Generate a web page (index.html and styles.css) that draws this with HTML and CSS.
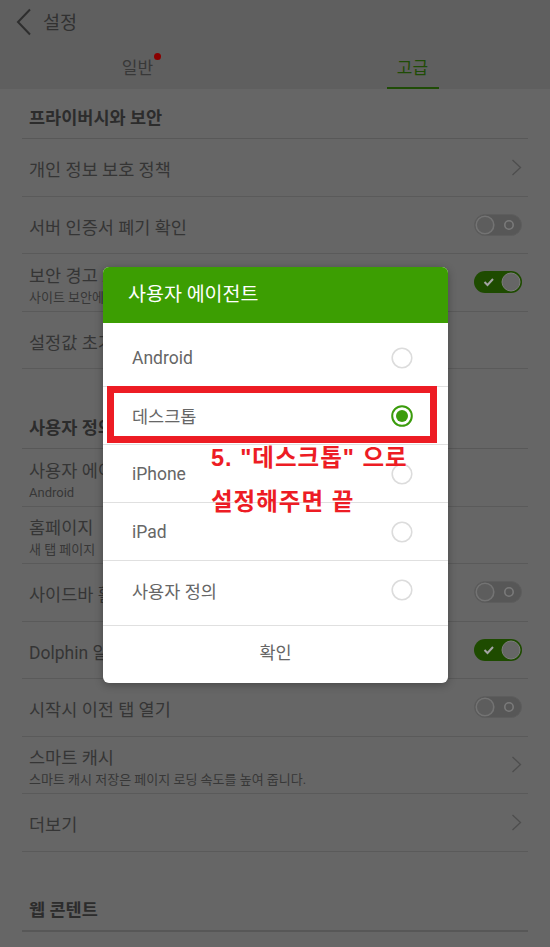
FILE: index.html
```html
<!DOCTYPE html>
<html lang="ko">
<head>
<meta charset="utf-8">
<title>설정</title>
<link rel="stylesheet" href="styles.css">
</head>
<body>
<div class="screen">
  <header class="topbar">
    <svg class="back" width="16" height="28" viewBox="0 0 16 28"><polyline points="14,1.5 2,14 14,26.5" fill="none" stroke="#2e2e2e" stroke-width="2"/></svg>
    <span class="title">설정</span>
  </header>
  <nav class="tabs">
    <div class="tab"><span class="tab-label">일반<span class="dot"></span></span></div>
    <div class="tab active"><span class="tab-label">고급</span></div>
  </nav>

  <main class="list">
    <div class="section first"><span>프라이버시와 보안</span></div>
    <div class="row"><div class="text"><div class="t">개인 정보 보호 정책</div></div><svg class="chev" width="11" height="17" viewBox="0 0 11 17"><polyline points="1.5,1 9.5,8.5 1.5,16" fill="none" stroke="#4e4e4e" stroke-width="1.3"/></svg></div>
    <div class="row"><div class="text"><div class="t">서버 인증서 폐기 확인</div></div><svg class="tog" width="48" height="22" viewBox="0 0 48 22"><rect x="0.5" y="0.5" width="47" height="21" rx="10.5" fill="#575757" stroke="#5d5d5d"/><circle cx="11" cy="11" r="8.8" fill="#5d5d5d" stroke="#737373" stroke-width="1.6"/><circle cx="35" cy="11" r="4.2" fill="none" stroke="#7a7a7a" stroke-width="1.6"/></svg></div>
    <div class="row two"><div class="text"><div class="t">보안 경고 표시</div><div class="s">사이트 보안에 문제가 있을 경우 경고합니다</div></div><svg class="tog" width="48" height="22" viewBox="0 0 48 22"><rect x="0" y="0" width="48" height="22" rx="11" fill="#1e4b00"/><circle cx="37" cy="11" r="9" fill="#666" stroke="#7c7c7c" stroke-width="1"/><polyline points="10.5,11 13.5,14 19,8" fill="none" stroke="#a4a4a4" stroke-width="2"/></svg></div>
    <div class="row"><div class="text"><div class="t">설정값 초기화</div></div></div>

    <div class="section"><span>사용자 정의</span></div>
    <div class="row two"><div class="text"><div class="t">사용자 에이전트</div><div class="s">Android</div></div></div>
    <div class="row two"><div class="text"><div class="t">홈페이지</div><div class="s">새 탭 페이지</div></div></div>
    <div class="row"><div class="text"><div class="t">사이드바 활성화</div></div><svg class="tog" width="48" height="22" viewBox="0 0 48 22"><rect x="0.5" y="0.5" width="47" height="21" rx="10.5" fill="#575757" stroke="#5d5d5d"/><circle cx="11" cy="11" r="8.8" fill="#5d5d5d" stroke="#737373" stroke-width="1.6"/><circle cx="35" cy="11" r="4.2" fill="none" stroke="#7a7a7a" stroke-width="1.6"/></svg></div>
    <div class="row"><div class="text"><div class="t">Dolphin 알림</div></div><svg class="tog" width="48" height="22" viewBox="0 0 48 22"><rect x="0" y="0" width="48" height="22" rx="11" fill="#1e4b00"/><circle cx="37" cy="11" r="9" fill="#666" stroke="#7c7c7c" stroke-width="1"/><polyline points="10.5,11 13.5,14 19,8" fill="none" stroke="#a4a4a4" stroke-width="2"/></svg></div>
    <div class="row"><div class="text"><div class="t">시작시 이전 탭 열기</div></div><svg class="tog" width="48" height="22" viewBox="0 0 48 22"><rect x="0.5" y="0.5" width="47" height="21" rx="10.5" fill="#575757" stroke="#5d5d5d"/><circle cx="11" cy="11" r="8.8" fill="#5d5d5d" stroke="#737373" stroke-width="1.6"/><circle cx="35" cy="11" r="4.2" fill="none" stroke="#7a7a7a" stroke-width="1.6"/></svg></div>
    <div class="row two"><div class="text"><div class="t">스마트 캐시</div><div class="s">스마트 캐시 저장은 페이지 로딩 속도를 높여 줍니다.</div></div><svg class="chev" width="11" height="17" viewBox="0 0 11 17"><polyline points="1.5,1 9.5,8.5 1.5,16" fill="none" stroke="#4e4e4e" stroke-width="1.3"/></svg></div>
    <div class="row"><div class="text"><div class="t">더보기</div></div><svg class="chev" width="11" height="17" viewBox="0 0 11 17"><polyline points="1.5,1 9.5,8.5 1.5,16" fill="none" stroke="#4e4e4e" stroke-width="1.3"/></svg></div>

    <div class="section web"><span>웹 콘텐트</span></div>
    <div class="row"><div class="text"><div class="t">페이지 스크롤 속도</div></div></div>
  </main>

  <div class="dialog">
    <div class="dlg-head">사용자 에이전트</div>
    <div class="dlg-list">
      <div class="opt"><span>Android</span><svg width="22" height="22" viewBox="0 0 22 22"><circle cx="11" cy="11" r="9.8" fill="none" stroke="#dcdcdc" stroke-width="1.6"/></svg></div>
      <div class="opt"><span>데스크톱</span><svg width="22" height="22" viewBox="0 0 22 22"><circle cx="11" cy="11" r="9.8" fill="none" stroke="#3b9c0c" stroke-width="2"/><circle cx="11" cy="11" r="6" fill="#3b9c0c"/></svg></div>
      <div class="opt"><span>iPhone</span><svg width="22" height="22" viewBox="0 0 22 22"><circle cx="11" cy="11" r="9.8" fill="none" stroke="#dcdcdc" stroke-width="1.6"/></svg></div>
      <div class="opt"><span>iPad</span><svg width="22" height="22" viewBox="0 0 22 22"><circle cx="11" cy="11" r="9.8" fill="none" stroke="#dcdcdc" stroke-width="1.6"/></svg></div>
      <div class="opt"><span>사용자 정의</span><svg width="22" height="22" viewBox="0 0 22 22"><circle cx="11" cy="11" r="9.8" fill="none" stroke="#dcdcdc" stroke-width="1.6"/></svg></div>
    </div>
    <div class="dlg-btn">확인</div>
  </div>

  <div class="mark-box"></div>
  <div class="mark-text">5. "데스크톱" 으로<br>설정해주면 끝</div>
</div>
</body>
</html>
```

FILE: styles.css
```css
* { box-sizing: border-box; }
html, body { margin: 0; padding: 0; }
body {
  width: 550px;
  height: 947px;
  overflow: hidden;
  font-family: Roboto, "Noto Sans CJK KR", sans-serif;
  background: #666666;
}
.screen {
  position: relative;
  width: 550px;
  height: 947px;
  overflow: hidden;
  background: #666666;
}
.topbar {
  height: 44px;
  background: #5f5f5f;
  display: flex;
  align-items: center;
  padding-left: 16px;
  gap: 11px;
}
.topbar .back { display: block; }
.topbar .title {
  font-size: 18.5px;
  color: #313131;
  line-height: 24px;
  padding-top: 2px;
}
.tabs {
  height: 45px;
  background: #5f5f5f;
  display: flex;
}
.tab {
  flex: 1;
  display: flex;
  justify-content: center;
  align-items: center;
  padding-top: 3px;
  font-size: 17px;
  color: #383838;
  position: relative;
}
.tab-label { position: relative; line-height: 22px; }
.tab .dot {
  position: absolute;
  right: -8px;
  top: -4px;
  width: 7px;
  height: 7px;
  border-radius: 50%;
  background: #8a0000;
}
.tab.active { color: #1f4c06; }
.tab.active::after {
  content: "";
  position: absolute;
  bottom: 0;
  left: 50%;
  width: 52px;
  margin-left: -26px;
  height: 2px;
  background: #1f4c06;
}

.list { padding: 0 22px; }
.section {
  height: 50px;
  margin-top: 30px;
  border-bottom: 1px solid #585858;
  display: flex;
  align-items: flex-end;
  padding: 0 0 10px 7px;
  font-size: 17.5px;
  font-weight: 700;
  color: #2c2c2c;
  line-height: 20px;
}
.section.first { margin-top: 0; }
.section.web { border-bottom: 2px solid #575757; }
.row {
  height: 57.5px;
  border-bottom: 1px solid #5a5a5a;
  display: flex;
  align-items: center;
  justify-content: space-between;
  padding: 0 6px 0 7px;
}
.row .text { padding-top: 6px; white-space: nowrap; }
.row.two .text { padding-top: 8px; }
.row .t {
  font-size: 17.5px;
  color: #353535;
  line-height: 22px;
}
.row .s {
  font-size: 13px;
  color: #373737;
  line-height: 21px;
}
.row .chev { display: block; }
.row .tog { display: block; flex-shrink: 0; }

.dialog {
  position: absolute;
  left: 103px;
  top: 267px;
  width: 345px;
  background: #ffffff;
  border-radius: 6px;
  overflow: hidden;
  box-shadow: 0 2px 8px rgba(0,0,0,0.3);
}
.dlg-head {
  height: 56px;
  background: #3c9e02;
  color: #ffffff;
  font-size: 19.5px;
  line-height: 56px;
  padding-left: 25px;
}
.dlg-list { padding: 6px 0; border-bottom: 1px solid #e0e0e0; }
.opt {
  height: 58px;
  border-bottom: 1px solid #e0e0e0;
  display: flex;
  align-items: center;
  justify-content: space-between;
  padding: 0 35px 0 29px;
  font-size: 17.5px;
  color: #666666;
}
.opt:last-child { border-bottom: none; }
.opt svg { display: block; }
.dlg-btn {
  height: 57px;
  display: flex;
  align-items: center;
  justify-content: center;
  padding-bottom: 6px;
  font-size: 17.5px;
  color: #666666;
}

.mark-box {
  position: absolute;
  left: 107px;
  top: 386px;
  width: 330px;
  height: 57px;
  border: 7px solid #ed1c24;
}
.mark-text {
  position: absolute;
  left: 211px;
  top: 436px;
  font-family: "Liberation Sans", "Noto Sans CJK KR", sans-serif;
  font-weight: 700;
  font-size: 23.5px;
  letter-spacing: 1px;
  line-height: 44px;
  color: #ed1c24;
  white-space: nowrap;
}
```
